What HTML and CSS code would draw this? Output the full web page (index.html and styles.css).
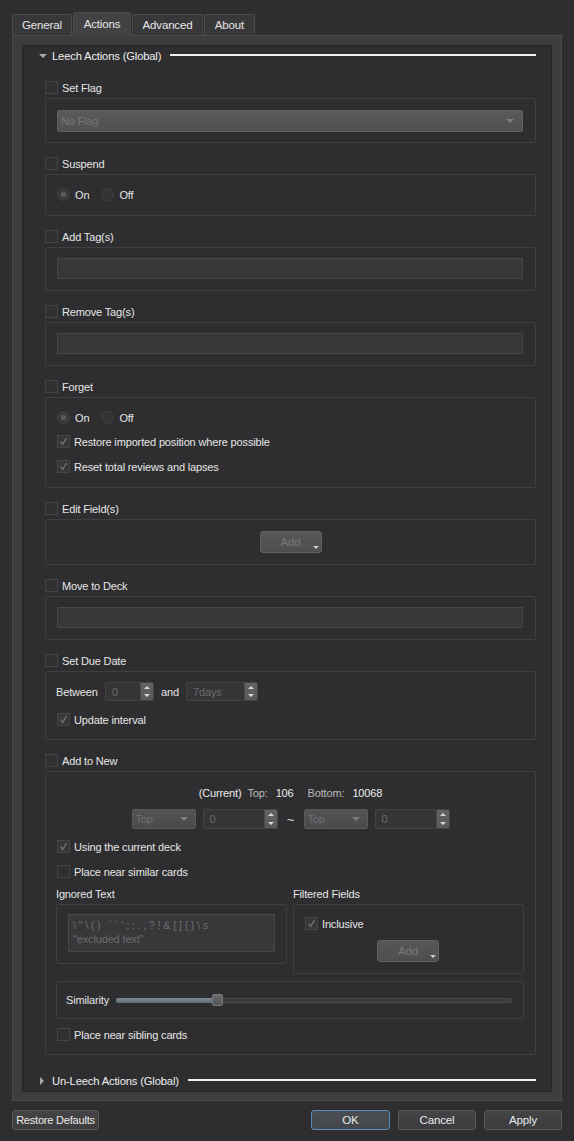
FILE: index.html
```html
<!DOCTYPE html>
<html>
<head>
<meta charset="utf-8">
<link rel="stylesheet" href="styles.css">
</head>
<body>
<div class="dialog">
  <div class="tabs">
    <div class="tab t-general">General</div>
    <div class="tab t-actions active">Actions</div>
    <div class="tab t-advanced">Advanced</div>
    <div class="tab t-about">About</div>
  </div>
  <div class="pane">
    <div class="scroll">
      <div class="sec-head">
        <span class="tri-down"></span><span class="sec-title">Leech Actions (Global)</span><span class="sec-line"></span>
      </div>

      <div class="actions">
        <div class="action">
          <div class="cb"><span class="box"></span><span class="cb-label">Set Flag</span></div>
          <div class="group g-flag">
            <div class="combo combo-wide"><span>No Flag</span><span class="c-arrow"></span></div>
          </div>
        </div>

        <div class="action">
          <div class="cb"><span class="box"></span><span class="cb-label">Suspend</span></div>
          <div class="group g-radio">
            <div class="radios">
              <div class="radio-item"><span class="radio checked"></span><span>On</span></div>
              <div class="radio-item"><span class="radio"></span><span>Off</span></div>
            </div>
          </div>
        </div>

        <div class="action">
          <div class="cb"><span class="box"></span><span class="cb-label">Add Tag(s)</span></div>
          <div class="group g-input"><div class="line-input"></div></div>
        </div>

        <div class="action">
          <div class="cb"><span class="box"></span><span class="cb-label">Remove Tag(s)</span></div>
          <div class="group g-input"><div class="line-input"></div></div>
        </div>

        <div class="action">
          <div class="cb"><span class="box"></span><span class="cb-label">Forget</span></div>
          <div class="group g-forget">
            <div class="radios">
              <div class="radio-item"><span class="radio checked"></span><span>On</span></div>
              <div class="radio-item"><span class="radio"></span><span>Off</span></div>
            </div>
            <div class="cb cb-in"><span class="box checked"><svg viewBox="0 0 13 13" width="13" height="13"><polyline points="3,6.5 5.5,10 10,2.5" /></svg></span><span class="cb-label">Restore imported position where possible</span></div>
            <div class="cb cb-in"><span class="box checked"><svg viewBox="0 0 13 13" width="13" height="13"><polyline points="3,6.5 5.5,10 10,2.5" /></svg></span><span class="cb-label">Reset total reviews and lapses</span></div>
          </div>
        </div>

        <div class="action">
          <div class="cb"><span class="box"></span><span class="cb-label">Edit Field(s)</span></div>
          <div class="group g-button">
            <div class="btn-add">Add<span class="menu-ind"></span></div>
          </div>
        </div>

        <div class="action">
          <div class="cb"><span class="box"></span><span class="cb-label">Move to Deck</span></div>
          <div class="group g-input"><div class="line-input"></div></div>
        </div>

        <div class="action">
          <div class="cb"><span class="box"></span><span class="cb-label">Set Due Date</span></div>
          <div class="group g-due">
            <div class="due-row">
              <span class="lbl-between">Between</span>
              <div class="spin spin-a"><span class="spin-val">0</span><span class="spin-btns"><span class="up"></span><span class="down"></span></span></div>
              <span class="lbl-and">and</span>
              <div class="spin spin-b"><span class="spin-val">7days</span><span class="spin-btns"><span class="up"></span><span class="down"></span></span></div>
            </div>
            <div class="cb cb-in cb-due"><span class="box checked"><svg viewBox="0 0 13 13" width="13" height="13"><polyline points="3,6.5 5.5,10 10,2.5" /></svg></span><span class="cb-label">Update interval</span></div>
          </div>
        </div>

        <div class="action last">
          <div class="cb"><span class="box"></span><span class="cb-label">Add to New</span></div>
          <div class="group g-new">
            <div class="info-row">
              <span class="hi">(Current)</span><span class="lo">Top:</span><span class="hi">106</span><span class="lo gap">Bottom:</span><span class="hi">10068</span>
            </div>
            <div class="pos-row">
              <div class="combo combo-small"><span>Top</span><span class="c-arrow"></span></div>
              <div class="spin spin-c"><span class="spin-val">0</span><span class="spin-btns"><span class="up"></span><span class="down"></span></span></div>
              <span class="tilde">~</span>
              <div class="combo combo-small"><span>Top</span><span class="c-arrow"></span></div>
              <div class="spin spin-c"><span class="spin-val">0</span><span class="spin-btns"><span class="up"></span><span class="down"></span></span></div>
            </div>
            <div class="cb cb-in cb-deck"><span class="box checked"><svg viewBox="0 0 13 13" width="13" height="13"><polyline points="3,6.5 5.5,10 10,2.5" /></svg></span><span class="cb-label">Using the current deck</span></div>
            <div class="cb cb-in cb-similar"><span class="box"></span><span class="cb-label">Place near similar cards</span></div>
            <div class="cols">
              <div class="col">
                <div class="col-title">Ignored Text</div>
                <div class="group g-ignored">
                  <div class="textarea"><div class="ta-line sym">\"\() ``';:.,?!&amp;[]{}\s</div><div class="ta-line">"excluded text"</div></div>
                </div>
              </div>
              <div class="col">
                <div class="col-title">Filtered Fields</div>
                <div class="group g-filtered">
                  <div class="cb cb-in"><span class="box checked"><svg viewBox="0 0 13 13" width="13" height="13"><polyline points="3,6.5 5.5,10 10,2.5" /></svg></span><span class="cb-label">Inclusive</span></div>
                  <div class="btn-add btn-add2">Add<span class="menu-ind"></span></div>
                </div>
              </div>
            </div>
            <div class="group g-sim">
              <span class="sim-label">Similarity</span>
              <div class="slider">
                <div class="track-fill"></div>
                <div class="track-rest"></div>
                <div class="handle"></div>
              </div>
            </div>
            <div class="cb cb-in cb-sibling"><span class="box"></span><span class="cb-label">Place near sibling cards</span></div>
          </div>
        </div>
      </div>

      <div class="sec-head sec-unleech">
        <span class="tri-right"></span><span class="sec-title">Un-Leech Actions (Global)</span><span class="sec-line"></span>
      </div>
    </div>
  </div>
  <div class="buttons">
    <div class="btn btn-restore">Restore Defaults</div>
    <div class="spacer"></div>
    <div class="btn btn-ok">OK</div>
    <div class="btn btn-cancel">Cancel</div>
    <div class="btn btn-apply">Apply</div>
  </div>
</div>
</body>
</html>
```

FILE: styles.css
```css
* { box-sizing: border-box; }
html, body { margin: 0; padding: 0; }
body {
  background: #2e2e30;
  font-family: "Liberation Sans", Arial, sans-serif;
  font-size: 11px;
  letter-spacing: -0.15px;
  color: #e4e4e4;
  width: 574px;
  height: 1141px;
  overflow: hidden;
}
.dialog { padding: 12px 12px 0 12px; }

/* tabs */
.tabs { display: flex; align-items: flex-end; height: 23px; position: relative; z-index: 2; }
.tab {
  height: 21px;
  border: 1px solid #4a4a4c;
  border-bottom: none;
  background: #38383a;
  border-radius: 2px 2px 0 0;
  display: flex; align-items: center; justify-content: center;
  color: #e6e6e6;
  margin-right: 1px;
  font-size: 11.5px;
}
.t-general { width: 60px; }
.t-actions { width: 58px; }
.t-advanced { width: 71px; }
.t-about { width: 51px; }
.tab.active { height: 24px; margin-bottom: -1px; background: #424244; padding-bottom: 2px; }

/* pane */
.pane {
  border: 1px solid #4a4a4c;
  background: #3d3d3f;
  padding: 9px 9px 8px 9px;
  height: 1066px;
}
.scroll {
  border: 1px solid #252527;
  background: #2e2e30;
  height: 1047px;
  padding: 0 15px;
}

.sec-head { display: flex; align-items: center; height: 16px; margin-top: 2px; }
.tri-down { width: 0; height: 0; border-left: 4px solid transparent; border-right: 4px solid transparent; border-top: 4px solid #a8a8a8; margin-left: 1px; margin-right: 5px; }
.tri-right { width: 0; height: 0; border-top: 4px solid transparent; border-bottom: 4px solid transparent; border-left: 4px solid #a8a8a8; margin-left: 2px; margin-right: 8px; }
.sec-title { color: #eeeeee; white-space: nowrap; font-size: 11.2px; }
.sec-line { flex: 1; height: 2px; background: #f0f0f0; margin-left: 9px; margin-top: -2px; }
.sec-unleech { margin-top: 18px; }

.actions { padding-left: 7px; margin-top: 17px; }
.action { margin-bottom: 14px; }
.action.last { margin-bottom: 0; }

/* checkbox */
.cb { display: flex; align-items: center; height: 13px; }
.box {
  width: 13px; height: 13px; flex: none;
  border: 1px solid #444446;
  background: #303032;
  display: flex; align-items: center; justify-content: center;
}
.box.checked { background: #37373a; border-color: #464648; }
.box svg { display: block; }
.box polyline { fill: none; stroke: #6f6f6f; stroke-width: 1.6; }
.cb-label { margin-left: 4px; white-space: nowrap; color: #e6e6e6; }

/* groups */
.group { border: 1px solid #3f3f41; border-radius: 2px; margin-top: 4px; }
.g-flag { padding: 11px 12px 10px 11px; }
.combo {
  display: flex; align-items: center; justify-content: space-between;
  background: linear-gradient(#5a5a5c, #505052);
  border: 1px solid #5f5f61;
  border-radius: 2px;
  color: #767678;
}
.combo-wide { height: 22px; padding: 0 8px 0 3px; }
.c-arrow { width: 0; height: 0; border-left: 4px solid transparent; border-right: 4px solid transparent; border-top: 4px solid #7c7c7e; }
.combo-small { height: 20px; width: 64px; padding: 0 7px 0 3px; background: linear-gradient(#535355, #4b4b4d); border-color: #59595b; color: #707072; }

.g-radio { padding: 13px 11px 14px 11px; }
.radios { display: flex; align-items: center; height: 13px; }
.radio-item { display: flex; align-items: center; margin-right: 12px; }
.radio-item span:last-child { margin-left: 5px; }
.radio {
  width: 13px; height: 13px; border-radius: 50%;
  border: 1px solid #414143; background: #333335;
  display: block;
}
.radio.checked { background: radial-gradient(circle, #59595b 0 2.5px, #3a3a3c 3px); }

.g-input { padding: 10px 12px 11px 11px; }
.line-input { height: 21px; background: #38383a; border: 1px solid #48484a; border-radius: 1px; }

.g-forget { padding: 13px 11px 14px 11px; }
.cb-in + .cb-in { margin-top: 12px; }
.g-forget .radios { margin-bottom: 11px; }

.g-button { padding: 11px 0 11px 0; display: flex; justify-content: center; }
.btn-add {
  width: 62px; height: 22px;
  background: linear-gradient(#575759, #4e4e50);
  border: 1px solid #626264;
  border-radius: 3px;
  color: #78787a;
  display: flex; align-items: center; justify-content: center;
  font-size: 11.5px;
  position: relative;
}
.menu-ind { position: absolute; right: 2px; bottom: 3px; width: 0; height: 0; border-left: 3px solid transparent; border-right: 3px solid transparent; border-top: 3px solid #cfcfcf; }

/* due date */
.g-due { padding: 10px 10px 13px 10px; }
.due-row { display: flex; align-items: center; height: 19px; }
.lbl-between { width: 49px; }
.lbl-and { width: 32px; padding-left: 7px; }
.spin {
  display: flex; height: 19px;
  border: 1px solid #434345; border-radius: 2px;
  background: #353537;
  overflow: hidden;
}
.spin-a { width: 49px; }
.spin-b { width: 72px; }
.spin-val { flex: 1; color: #6c6c6e; padding-left: 6px; display: flex; align-items: center; }
.spin-btns { width: 13px; background: linear-gradient(#636365, #58585a); display: flex; flex-direction: column; border-left: 1px solid #4a4a4c; }
.spin-btns .up, .spin-btns .down { flex: 1; display: flex; align-items: center; justify-content: center; }
.spin-btns .up::after { content: ""; border-left: 3px solid transparent; border-right: 3px solid transparent; border-bottom: 3px solid #d8d8d8; }
.spin-btns .down::after { content: ""; border-left: 3px solid transparent; border-right: 3px solid transparent; border-top: 3px solid #d8d8d8; }
.cb-due { margin-top: 12px; margin-left: 1px; }

/* add to new */
.g-new { padding: 14px 11px 13px 11px; }
.info-row { display: flex; justify-content: center; align-items: center; height: 14px; }
.info-row .hi { color: #ececec; }
.info-row .lo { color: #b8b8ba; margin-left: 6px; margin-right: 8px; }
.info-row .lo.gap { margin-left: 14px; }
.pos-row { display: flex; justify-content: center; align-items: center; margin-top: 9px; height: 20px; }
.spin-c { width: 75px; height: 20px; margin-left: 7px; }
.tilde { width: 26px; text-align: center; color: #dcdcdc; font-size: 13px; }
.cb-deck { margin-top: 11px; }
.cb-similar { margin-top: 12px !important; }
.cols { display: grid; grid-template-columns: 231px 231px; column-gap: 6px; margin-top: 9px; margin-left: -1px; }
.col-title { height: 14px; line-height: 14px; color: #e6e6e6; }
.cols .group { margin-top: 3px; }
.g-ignored { padding: 9px 11px 11px 11px; }
.textarea { height: 38px; background: #38383a; border: 1px solid #48484a; padding: 3px 4px; color: #6c6c6e; line-height: 14px; }
.ta-line.sym { letter-spacing: 2.6px; }
.g-filtered { padding: 12px 11px 11px 11px; display: flex; flex-direction: column; }
.btn-add2 { margin-top: 10px; align-self: center; margin-left: -1px; }

.g-sim { margin-top: 7px; margin-left: -1px; height: 38px; display: flex; align-items: center; padding-left: 9px; padding-right: 11px; }
.sim-label { width: 50px; color: #e6e6e6; }
.slider { position: relative; flex: 1; height: 12px; display: flex; align-items: center; }
.track-fill { width: 96px; height: 5px; background: linear-gradient(#7c8a96, #5f6d79); border-radius: 2px 0 0 2px; }
.track-rest { flex: 1; height: 5px; background: #3a3a3c; border: 1px solid #4a4a4c; border-radius: 0 2px 2px 0; }
.handle { position: absolute; left: 96px; top: 0; width: 11px; height: 12px; background: linear-gradient(#6a6a6c, #565658); border: 1px solid #7a7a7c; border-radius: 2px; }
.cb-sibling { margin-top: 9px; }

/* bottom buttons */
.buttons { display: flex; margin-top: 9px; height: 20px; }
.spacer { flex: 1; }
.btn {
  height: 20px;
  background: linear-gradient(#444446, #3c3c3e);
  border: 1px solid #59595b;
  border-radius: 3px;
  display: flex; align-items: center; justify-content: center;
  color: #eaeaea;
  font-size: 11.5px;
  white-space: nowrap;
}
.btn-restore { width: 87px; font-size: 11px; letter-spacing: -0.2px; }
.btn-ok { width: 79px; border-color: #5a8cb5; background: linear-gradient(#4a4e53, #43474c); }
.btn-cancel { width: 78px; margin-left: 8px; }
.btn-apply { width: 78px; margin-left: 8px; }
```
